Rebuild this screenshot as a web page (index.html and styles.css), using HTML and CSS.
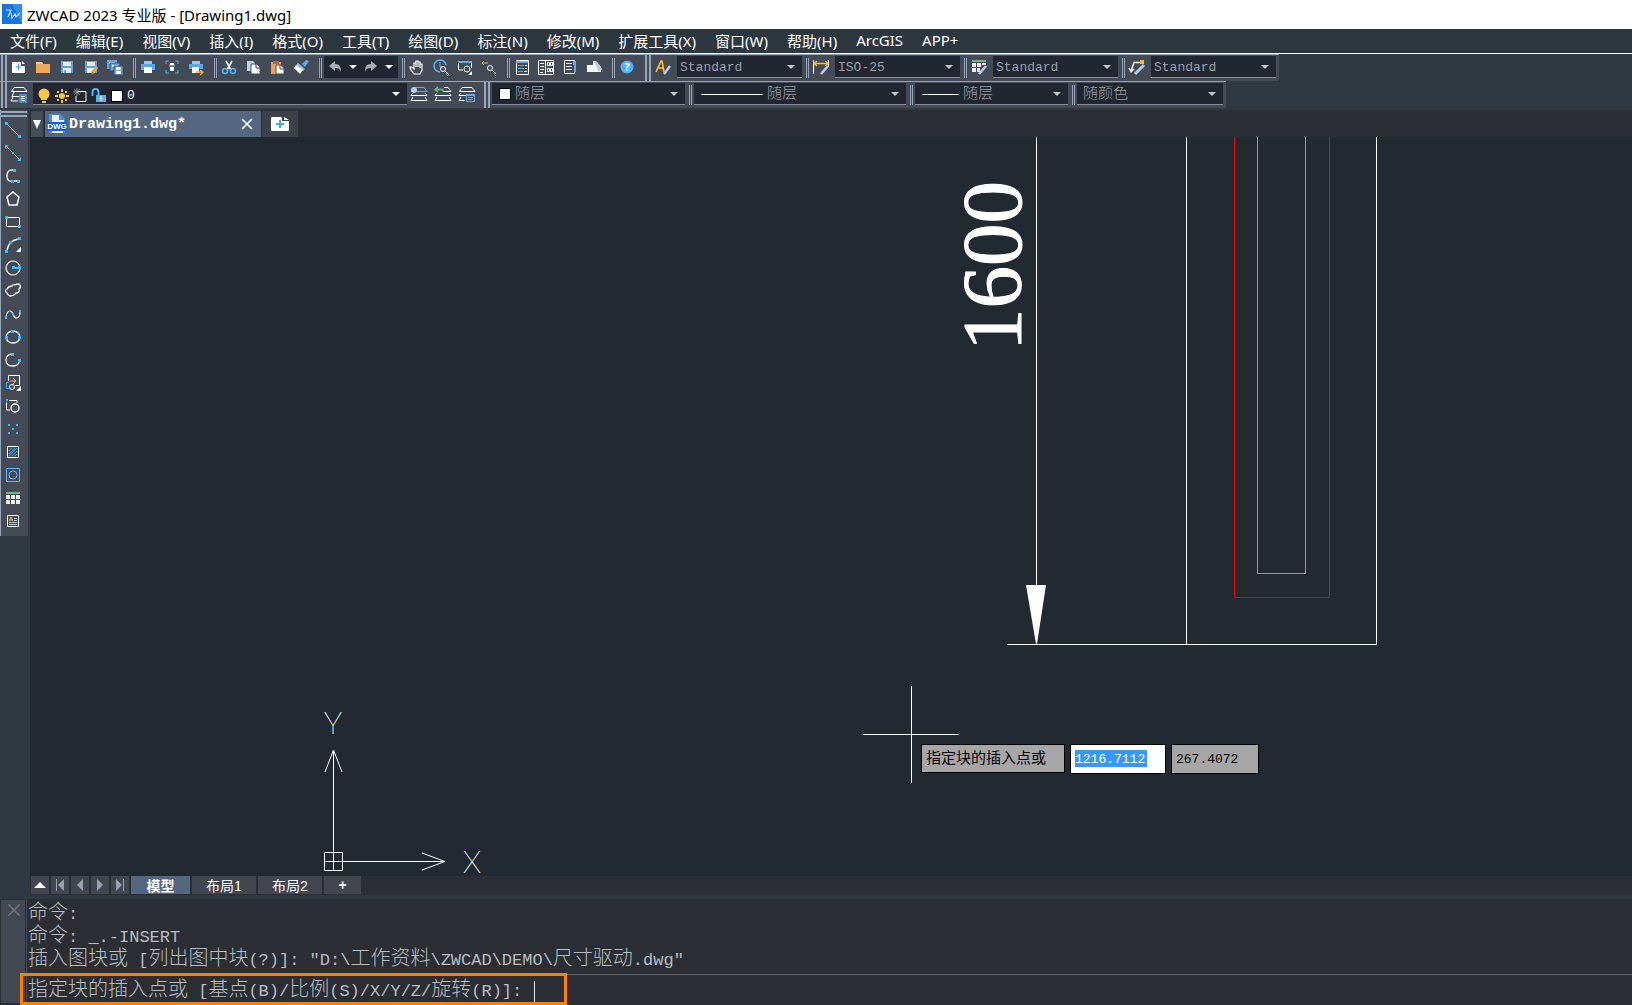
FILE: index.html
```html
<!DOCTYPE html>
<html lang="zh-CN">
<head>
<meta charset="utf-8">
<title>ZWCAD 2023 专业版 - [Drawing1.dwg]</title>
<link rel="stylesheet" href="styles.css">
</head>
<body>
<div class="app">
  <header class="titlebar">
    <svg class="logo" viewBox="0 0 20 20"><rect width="20" height="20" fill="#1573e8"/><path d="M10 0h10v20z" fill="#2d8cf5"/><path d="M4 6h5l-3 7M9 9l1 5 3-4 1 3 4-4" fill="none" stroke="#cfe6ff" stroke-width="1.200"/></svg>
    <span>ZWCAD 2023 专业版 - [Drawing1.dwg]</span>
  </header>

  <nav class="menu">
    <button>文件(F)</button><button>编辑(E)</button><button>视图(V)</button><button>插入(I)</button><button>格式(O)</button><button>工具(T)</button><button>绘图(D)</button><button>标注(N)</button><button>修改(M)</button><button>扩展工具(X)</button><button>窗口(W)</button><button>帮助(H)</button><button>ArcGIS</button><button>APP+</button>
  </nav>

  <div class="toolbars">
    <div class="toolbar">
      <i class="grip first"></i>
      <button class="tool" aria-label="新建"><svg viewBox="0 0 18 18"><path d="M2 3h9v4h4v7H2z" fill="#fff"/><path d="M12 2l3 3h-3z" fill="#fff"/><path d="M8.500 5v6M5.500 8h6" stroke="#2f9bf0" fill="none"/></svg></button>
      <button class="tool" aria-label="打开"><svg viewBox="0 0 18 18"><path d="M2 3h6l1 2h7v9H2z" fill="#f0a95c"/><path d="M2 3h6l1 2H2z" fill="#f9cd8f"/></svg></button>
      <button class="tool" aria-label="保存"><svg viewBox="0 0 18 18"><path d="M3 2h12v12H3z" fill="#62a5e6"/><path d="M5 3h8v4H5zM5 9h8v5H5z" fill="#e8eef6"/><path d="M6 11h2v3H6z" fill="#62a5e6"/></svg></button>
      <button class="tool" aria-label="另存为"><svg viewBox="0 0 18 18"><path d="M3 2h12v12H3z" fill="#62a5e6"/><path d="M5 3h8v4H5zM5 9h8v5H5z" fill="#e8eef6"/><path d="M10 14l5-6" stroke="#f4a733" stroke-width="3"/><path d="M9 16l1-3 2 2z" fill="#d9533a"/></svg></button>
      <button class="tool" aria-label="全部保存"><svg viewBox="0 0 18 18"><path d="M1 1h10v9H1z" fill="#62a5e6"/><path d="M3 3h6v2H3z" fill="#fff"/><path d="M4 4h10v8H4z" fill="#62a5e6" stroke="#444b57"/><path d="M6 6h6v2H6z" fill="#fff"/><path d="M8 7h9v9H8z" fill="#62a5e6" stroke="#444b57"/><path d="M10 8h5v3h-5zM10 12h5v3h-5z" fill="#fff"/></svg></button>
      <i class="sep"></i>
      <button class="tool" aria-label="打印"><svg viewBox="0 0 18 18"><path d="M5 2h8v3H5z" fill="#9cc8f2"/><path d="M2 5h14v6H2z" fill="#5ba6ec"/><path d="M5 8h8v6H5z" fill="#fff"/></svg></button>
      <button class="tool" aria-label="打印预览"><svg viewBox="0 0 18 18" fill="none"><path d="M3 5V2h3M12 2h3v3M15 11v3h-3M6 14H3v-3" stroke="#5bb0f5"/><path d="M6 6h6M6 7h6" stroke="#5bb0f5"/><path d="M7 4h4v2H7zM7 8h4v4H7z" fill="#fff"/></svg></button>
      <button class="tool" aria-label="发布"><svg viewBox="0 0 18 18"><path d="M5 2h8v3H5z" fill="#9cc8f2"/><path d="M2 5h14v5H2z" fill="#5ba6ec"/><path d="M5 8h7v6H5z" fill="#fff"/><path d="M9 13h6M13 11l3 2-3 3" stroke="#f4ad3c" stroke-width="1.300" fill="none"/></svg></button>
      <i class="sep"></i>
      <button class="tool" aria-label="剪切"><svg viewBox="0 0 18 18" fill="none"><path d="M6 2l5 9M12 2l-5 9" stroke="#fff" stroke-width="1.600"/><circle cx="5" cy="12" r="2.500" stroke="#5bb0f5" stroke-width="1.500"/><circle cx="13" cy="12" r="2.500" stroke="#5bb0f5" stroke-width="1.500"/></svg></button>
      <button class="tool" aria-label="复制"><svg viewBox="0 0 18 18"><path d="M3 2h6l2 2v8H3z" fill="#b9d5ee"/><path d="M7 5h6l3 3v7H7z" fill="#fff" stroke="#444b57"/><path d="M12 5v4h4" fill="none" stroke="#444b57"/></svg></button>
      <button class="tool" aria-label="粘贴"><svg viewBox="0 0 18 18"><path d="M3 3h10v12H3z" fill="#f0a050"/><path d="M5 2h6v3H5z" fill="#b06a38"/><path d="M8 6h5l3 3v6H8z" fill="#fff" stroke="#444b57"/><path d="M12 6v4h4" fill="none" stroke="#444b57"/></svg></button>
      <button class="tool" aria-label="特性匹配"><svg viewBox="0 0 18 18"><path d="M10 5l4-4 3 1-4 6z" fill="#63a9ee"/><path d="M6 4l7 6-2 2-7-6z" fill="#8bc0f0"/><path d="M4 6l7 5-3 4-6-6z" fill="#fff"/></svg></button>
      <i class="sep"></i>
      <div class="history">
        <button aria-label="放弃"><svg viewBox="0 0 18 18"><path d="M3 8l6-5v3c5 0 6 3 6 8-1-3-2-4-6-4v3z" fill="#aaadb2"/></svg></button>
        <button class="drop" aria-label="放弃列表"></button>
        <button aria-label="重做"><svg viewBox="0 0 18 18"><path d="M15 8L9 3v3c-5 0-6 3-6 8 1-3 2-4 6-4v3z" fill="#aaadb2"/></svg></button>
        <button class="drop" aria-label="重做列表"></button>
      </div>
      <i class="sep"></i>
      <button class="tool" aria-label="平移"><svg viewBox="0 0 18 18" fill="none" stroke="#fff" stroke-width="1.200"><path d="M6 15l-3-4-1-3 2 0 2 2V4h2V2h2v1h2v2h2v6l-2 4zM8 4v4M10 3v5M12 5v4"/></svg></button>
      <button class="tool" aria-label="实时缩放"><svg viewBox="0 0 18 18" fill="none"><path d="M8 13a6 6 0 1 1 6-7" stroke="#5bb0f5" stroke-width="1.500"/><path d="M8 3v5h3" stroke="#5bb0f5"/><circle cx="11" cy="10" r="2.500" stroke="#fff"/><path d="M13 12l4 4" stroke="#fff"/></svg></button>
      <button class="tool" aria-label="窗口缩放"><svg viewBox="0 0 18 18" fill="none"><path d="M2 3h14" stroke="#5bb0f5" stroke-width="2"/><path d="M2.500 4v7H7M15.500 4v5" stroke="#fff"/><circle cx="11" cy="10" r="3" stroke="#fff"/><path d="M16 12v4h-4z" fill="#fff"/></svg></button>
      <button class="tool" aria-label="上一个视图"><svg viewBox="0 0 18 18" fill="none"><path d="M2 4h6M4 2L2 4l2 2" stroke="#f4b53c"/><circle cx="10" cy="9" r="2.500" stroke="#fff"/><path d="M12 11l4 4" stroke="#fff"/></svg></button>
      <i class="sep"></i>
      <button class="tool" aria-label="特性"><svg viewBox="0 0 18 18" fill="none"><path d="M3.500 1.500h12v14h-12z" stroke="#fff"/><path d="M3 3h12" stroke="#5bb0f5" stroke-width="2"/><path d="M5 6.500h6M5 9.500h6M5 12.500h5" stroke="#5bb0f5"/><path d="M12 6.500h2M12 9.500h2M11 12.500h3" stroke="#fff"/></svg></button>
      <button class="tool" aria-label="设计中心"><svg viewBox="0 0 18 18" fill="none" stroke="#fff"><path d="M1.500 1.500h15v14h-15zM8.500 1v15M3 4.500h4M3 7.500h4M3 10.500h4M3 13.500h3M10.500 3.500h2v3h-2zM13.500 3.500h2v3h-2zM10.500 9.500h2v3h-2zM13.500 9.500h2v3h-2z"/></svg></button>
      <button class="tool" aria-label="工具选项板"><svg viewBox="0 0 18 18" fill="none"><path d="M3.500 1.500h10v13h-10z" stroke="#fff"/><path d="M12 2h3v11h-2V6h-1z" fill="#5bb0f5"/><path d="M5 4.500h6M5 7.500h6M5 10.500h6" stroke="#e8eef6"/></svg></button>
      <button class="tool" aria-label="清理"><svg viewBox="0 0 18 18"><path d="M2 6h6V2h3l5 6v5H2z" fill="#fff"/><path d="M9 3h3l5 7-3 3z" fill="#c5c9cf"/></svg></button>
      <i class="sep"></i>
      <button class="tool" aria-label="帮助"><svg viewBox="0 0 18 18"><circle cx="9" cy="8" r="6.500" fill="#53b2fb"/><text x="9" y="12" text-anchor="middle" class="help-mark">?</text></svg></button>
      <i class="grip"></i>
      <button class="tool" aria-label="文字样式"><svg viewBox="0 0 18 18" fill="none"><path d="M2 13L7 2h1l2 11M4 9h5" stroke="#fcc02e" stroke-width="1.600"/><path d="M10 15l6-8" stroke="#b4cdea" stroke-width="2.500"/></svg></button>
      <label class="combo style"><select aria-label="文字样式"><option>Standard</option></select></label>
      <i class="sep"></i>
      <button class="tool" aria-label="标注样式"><svg viewBox="0 0 18 18" fill="none"><path d="M1.500 1v14M16.500 1v7" stroke="#fff"/><path d="M2 4.500h13M5 2L2 4.500 5 7M13 2l3 2.500L13 7" stroke="#fcc02e" stroke-width="1.500"/><path d="M9 15l7-8" stroke="#b4cdea" stroke-width="2.500"/></svg></button>
      <label class="combo style"><select aria-label="标注样式"><option>ISO-25</option></select></label>
      <i class="sep"></i>
      <button class="tool" aria-label="表格样式"><svg viewBox="0 0 18 18"><path d="M2 1h14v2H2z" fill="#6fbf84"/><path d="M2 4h4v4H2zM7 4h4v4H7zM12 4h4v2h-4zM2 9h4v4H2zM7 9h3v4H7z" fill="#f0f0ee"/><path d="M9 15l7-8" stroke="#b4cdea" stroke-width="2.500"/></svg></button>
      <label class="combo style"><select aria-label="表格样式"><option>Standard</option></select></label>
      <i class="sep"></i>
      <button class="tool" aria-label="多重引线样式"><svg viewBox="0 0 18 18" fill="none"><path d="M12 3.500H6L3 12M1 9l2 4 3-3" stroke="#fff" stroke-width="1.300"/><path d="M12 1h4v4h-4z" fill="#fcc02e"/><path d="M7 15l9-9" stroke="#b4cdea" stroke-width="3"/></svg></button>
      <label class="combo style"><select aria-label="多重引线样式"><option>Standard</option></select></label>
    </div>

    <div class="toolbar">
      <i class="grip first"></i>
      <button class="tool" aria-label="图层特性"><svg viewBox="0 0 18 18" fill="none"><path d="M1.500 5.500L4 1.500h10l3 4zM4 6l-2 4.500h7M3 11l-2 4h7" stroke="#fff"/><path d="M9 8h8v9H9z" fill="#3f8fe0"/><path d="M11 10.500h4M11 12.500h4M11 14.500h4" stroke="#fff"/></svg></button>
      <label class="combo layer">
        <svg class="state" viewBox="0 0 70 16"><circle cx="7" cy="6" r="5.500" fill="#fdc73a"/><path d="M4 9h6v3H4zM5 13h4v2H5z" fill="#fdc73a"/><g fill="#fdc73a"><circle cx="25" cy="8" r="3"/><path d="M24 1h2v3h-2zM24 12h2v3h-2zM18 7h3v2h-3zM29 7h3v2h-3zM20 3h2v2h-2zM28 3h2v2h-2zM20 11h2v2h-2zM28 11h2v2h-2z"/></g><path d="M41 3.500h8v10h-10V8" fill="none" stroke="#fff"/><path d="M37 1l6 6M43 1l-6 6M40 0v8M36 4h8" stroke="#aab" stroke-width=".8"/><path d="M55.500 8V4q0-3 3-3t3 3v4" fill="none" stroke="#4db5fb" stroke-width="2"/><path d="M59 7h10v7H59z" fill="#4db5fb"/><path d="M64 8v5M62 10.500h4" stroke="#fff"/></svg>
        <i class="swatch"></i>
        <select aria-label="图层"><option>0</option></select>
      </label>
      <button class="tool" aria-label="将对象的图层置为当前"><svg viewBox="0 0 18 18" fill="none" stroke="#fff"><path d="M1.500 5.500L4 1.500h10l3 4z" stroke="#5bb0f5"/><path d="M3 7l-2 2.500h16L15 7M3 11l-2 3.500h16L15 11"/><circle cx="4" cy="4" r="3" fill="#b4cdea" stroke="none"/></svg></button>
      <button class="tool" aria-label="上一个图层"><svg viewBox="0 0 18 18" fill="none" stroke="#fff"><path d="M10 1.500h4l3 4H9"/><path d="M3 7l-2 2.500h16L15 7M3 11l-2 3.500h16L15 11"/><path d="M9 6V3.500H2M4 1L1 3.500 4 6" stroke="#5fd04f" stroke-width="1.300"/></svg></button>
      <button class="tool" aria-label="图层状态"><svg viewBox="0 0 18 18" fill="none" stroke="#fff"><path d="M1.500 5.500L4 1.500h10l3 4zM3 7l-2 2.500h7M3 11l-2 3.500h6"/><path d="M8.500 8.500h8v7h-8z" stroke="#5bb0f5"/><path d="M8 9h9" stroke="#5bb0f5" stroke-width="2"/><path d="M10 11.500h5M10 13.500h5" stroke="#5bb0f5"/></svg></button>
      <i class="grip props"></i>
      <label class="combo color"><i class="swatch"></i><select aria-label="颜色"><option>随层</option></select></label>
      <i class="sep"></i>
      <label class="combo ltype"><i class="rule"></i><select aria-label="线型"><option>随层</option></select></label>
      <i class="sep"></i>
      <label class="combo lweight"><i class="rule"></i><select aria-label="线宽"><option>随层</option></select></label>
      <i class="sep"></i>
      <label class="combo pstyle"><select aria-label="打印样式"><option>随颜色</option></select></label>
    </div>
  </div>

  <main class="work">
    <aside class="draw">
      <button aria-label="直线"><svg viewBox="0 0 18 18"><path d="M3 3l12 12" stroke="#fff"/><path d="M1 1h3v3H1zM14 14h3v3h-3z" fill="#35bdff"/></svg></button>
      <button aria-label="构造线"><svg viewBox="0 0 18 18"><path d="M3 3l12 12" stroke="#fff" stroke-dasharray="3 1"/><path d="M1 1h4L1 5zM17 17h-4l4-4zM8 8h2v2H8z" fill="#35bdff"/></svg></button>
      <button aria-label="多段线"><svg viewBox="0 0 18 18"><path d="M11 3H8Q3 3 3 9t5 5h7" fill="none" stroke="#fff" stroke-width="1.300"/><path d="M9 2h3v3H9zM7 13h3v3H7zM13 13h3v3h-3z" fill="#35bdff"/></svg></button>
      <button aria-label="正多边形"><svg viewBox="0 0 18 18"><path d="M9 2l6 5-2 8H5L3 7z" fill="none" stroke="#fff" stroke-width="1.500"/></svg></button>
      <button aria-label="矩形"><svg viewBox="0 0 18 18"><path d="M2.500 4.500h13v9h-13z" fill="none" stroke="#fff"/><path d="M1 3h3v3H1zM14 12h3v3h-3z" fill="#35bdff"/></svg></button>
      <button aria-label="圆弧"><svg viewBox="0 0 18 18"><path d="M3 14Q5 4 15 3" fill="none" stroke="#fff" stroke-width="1.400"/><path d="M1 14h3v3H1zM5 5h3v3H5zM14 1h3v3h-3z" fill="#35bdff"/><path d="M17 11v5h-5z" fill="#fff"/></svg></button>
      <button aria-label="圆"><svg viewBox="0 0 18 18"><circle cx="9" cy="9" r="7" fill="none" stroke="#fff" stroke-width="1.200"/><path d="M9 9h6" stroke="#fff"/><path d="M8 7h3v3H8zM14 7h3v3h-3z" fill="#35bdff"/></svg></button>
      <button aria-label="修订云线"><svg viewBox="0 0 18 18"><path d="M3 7q2-3 5-3 1-2 3-1 3-2 5 0 1 3-1 4 1 4-3 4-2 3-6 3-2-1-3-3-3-2 0-4z" fill="none" stroke="#fff" stroke-width="1.300"/></svg></button>
      <button aria-label="样条曲线"><svg viewBox="0 0 18 18"><path d="M2 12q1-6 4-6 2 0 3 3 1 4 4 4 3-1 3-6" fill="none" stroke="#fff" stroke-width="1.200"/><path d="M1 11h2v3H1zM8 8h2v2H8zM15 5h2v2h-2z" fill="#35bdff"/></svg></button>
      <button aria-label="椭圆"><svg viewBox="0 0 18 18"><ellipse cx="9" cy="9" rx="7" ry="6" fill="none" stroke="#fff" stroke-width="1.300"/><path d="M7 2h3v3H7zM1 8h3v3H1zM14 8h3v3h-3z" fill="#35bdff"/></svg></button>
      <button aria-label="椭圆弧"><svg viewBox="0 0 18 18"><path d="M9 3Q2 3 2 9t7 6q6 0 6-5" fill="none" stroke="#fff" stroke-width="1.300"/><path d="M7 2h3v3H7zM14 8h3v3h-3z" fill="#35bdff"/></svg></button>
      <button aria-label="插入块"><svg viewBox="0 0 18 18" fill="none"><path d="M4.500 7V1.500h11v10H11" stroke="#fff"/><path d="M5 8.500H2.500v6H5" stroke="#35a8ff"/><path d="M6 7h5M9 4l3 3-3 3" stroke="#f5b944"/><circle cx="8" cy="13" r="2.500" stroke="#fff"/><path d="M17 12v5h-5z" fill="#fff"/></svg></button>
      <button aria-label="创建块"><svg viewBox="0 0 18 18" fill="none"><path d="M5 3.500h8V6M2.500 5v8H6" stroke="#fff"/><circle cx="11" cy="11" r="4" stroke="#fff" stroke-width="1.300"/><path d="M2 2h2v2H2z" fill="#35bdff"/></svg></button>
      <button aria-label="点"><svg viewBox="0 0 18 18"><path d="M4 4h2v2H4zM12 4h2v2h-2zM8 8h2v2H8zM4 12h2v2H4zM12 12h2v2h-2z" fill="#35bdff"/></svg></button>
      <button aria-label="图案填充"><svg viewBox="0 0 18 18" fill="none"><path d="M3.500 3.500h11v11h-11z" stroke="#fff"/><path d="M5 8l3-3M5 11l6-6M5 13l8-8M8 13l5-5M11 13l2-2" stroke="#4aa9f5"/></svg></button>
      <button aria-label="面域"><svg viewBox="0 0 18 18" fill="none" stroke="#5bb5fb"><path d="M2.500 2.500h13v13h-13z"/><circle cx="9" cy="9" r="4"/></svg></button>
      <button aria-label="表格"><svg viewBox="0 0 18 18"><path d="M2 3h14v2H2z" fill="#6fbf84"/><path d="M2 6h4v4H2zM7 6h4v4H7zM12 6h4v4h-4zM2 11h4v4H2zM7 11h4v4H7zM12 11h4v4h-4z" fill="#f0f0ee"/></svg></button>
      <button aria-label="多行文字"><svg viewBox="0 0 18 18" fill="none"><path d="M3.500 3.500h11v11h-11z" stroke="#fff"/><path d="M5 9l2-4 2 4M6 8h2" stroke="#fcc02e"/><path d="M10 6.500h3M10 8.500h3M5 10.500h8M5 12.500h8" stroke="#b4cdea"/></svg></button>
    </aside>

    <section class="document">
      <div class="doc-tabs">
        <button class="list" aria-label="图纸列表"></button>
        <div class="doc-tab">
          <svg class="dwg" viewBox="0 0 20 20"><path d="M2 0h11l5 5v14H2z" fill="#4d8fdd"/><path d="M5 1h7v5h5v4H5z" fill="#e8f1fb"/><path d="M5 17h11v2H5z" fill="#fff"/><path d="M0 8h20v9H0z" fill="#0d63d8"/><text x="10" y="15" text-anchor="middle">DWG</text></svg>
          <span>Drawing1.dwg*</span>
          <button class="close" aria-label="关闭"><svg viewBox="0 0 12 12"><path d="M1 1l10 10M11 1L1 11" stroke="#fff" stroke-width="1.600"/></svg></button>
        </div>
        <button class="new" aria-label="新建图纸"><svg viewBox="0 0 18 14"><path d="M0 0h11v4h7v10H0z" fill="#fff"/><path d="M13 0l5 3h-5z" fill="#fff"/><path d="M9 3v8M5 7h8" stroke="#43a5f0" stroke-width="2"/></svg></button>
      </div>

      <div class="canvas">
        <svg class="drawing">
          <g fill="none" stroke="#fff">
            <path d="M1006.500 0V508M977 507.500h370M1156.500 0V508M1346.500 0V508"/>
            <path d="M833 597.500h96M881.500 549v97"/>
            <path d="M294.500 715.500h18v18h-18zM303.500 734V613M294 724.500h121M295 635l8.500-22 8.500 22M392 716l23 8.500-23 8.500"/>
          </g>
          <path d="M996 448h20l-9 59h-1z" fill="#fff"/>
          <path d="M1204.500 0v460.500h95V0" fill="none" stroke="#f00"/>
          <path d="M1227.500 0v436.500h48V0" fill="none" stroke="#0f0"/>
          <text class="dim" transform="translate(991 214) rotate(-90)">1600</text>
          <text class="axis" x="303" y="597" text-anchor="middle">Y</text>
          <text class="axis" x="442" y="736" text-anchor="middle">X</text>
        </svg>
        <div class="dynamic">
          <label class="prompt" for="dyn-x">指定块的插入点或</label>
          <input id="dyn-x" class="active" value="1216.7112">
          <input aria-label="Y" value="267.4072">
        </div>
      </div>

      <div class="layouts">
        <button class="nav" aria-label="展开"><svg viewBox="0 0 12 12"><path d="M6 3l6 6H0z" fill="#fff"/></svg></button>
        <button class="nav" aria-label="第一个"><svg viewBox="0 0 12 12"><path d="M10 0v12L4 6z" fill="#99a2b0"/><path d="M2.500 0v12" stroke="#99a2b0"/></svg></button>
        <button class="nav" aria-label="上一个"><svg viewBox="0 0 12 12"><path d="M9 0v12L3 6z" fill="#99a2b0"/></svg></button>
        <button class="nav" aria-label="下一个"><svg viewBox="0 0 12 12"><path d="M3 0v12l6-6z" fill="#99a2b0"/></svg></button>
        <button class="nav" aria-label="最后一个"><svg viewBox="0 0 12 12"><path d="M2 0v12l6-6z" fill="#99a2b0"/><path d="M9.500 0v12" stroke="#99a2b0"/></svg></button>
        <button class="sheet model">模型</button>
        <button class="sheet">布局1</button>
        <button class="sheet">布局2</button>
        <button class="sheet add">+</button>
      </div>
    </section>
  </main>

  <footer class="command">
    <div class="handle"><button aria-label="关闭命令行"><svg viewBox="0 0 12 12"><path d="M0 0l12 12M12 0L0 12" stroke="#6d747f" stroke-width="1.500"/></svg></button></div>
    <div class="console">
      <div class="history-lines">
        <p><span class="zh">命令</span>:</p>
        <p><span class="zh">命令</span>: _.-INSERT</p>
        <p><span class="zh">插入图块或</span> [<span class="zh">列出图中块</span>(?)]: "D:\<span class="zh">工作资料</span>\ZWCAD\DEMO\<span class="zh">尺寸驱动</span>.dwg"</p>
      </div>
      <div class="entry">
        <label for="cmd"><span class="zh">指定块的插入点或</span> [<span class="zh">基点</span>(B)/<span class="zh">比例</span>(S)/X/Y/Z/<span class="zh">旋转</span>(R)]:</label>
        <i class="caret"></i>
        <input id="cmd" autocomplete="off">
      </div>
    </div>
    <div class="highlight"></div>
  </footer>
</div>
</body>
</html>
```
FILE: styles.css
```css
*, *::before, *::after { box-sizing: border-box; }
:root {
  --panel: #444b57;
  --frame: #303842;
  --strip: #2b2e32;
  --well: #212631;
  --edge: #97a5ba;
  --mono: "Liberation Mono", "Noto Sans CJK SC", monospace;
  --ui: "Noto Sans", "Noto Sans CJK SC", sans-serif;
}
body { margin: 0; font-family: var(--ui); }
button, select, input { margin: 0; padding: 0; border: 0; background: none; color: inherit; font: inherit; border-radius: 0; outline: 0; }
button { display: flex; align-items: center; justify-content: center; flex: none; }
svg { display: block; flex: none; }
.app { height: 100vh; display: flex; flex-direction: column; background: var(--frame); overflow: hidden; }

/* title and menu */
.titlebar { flex: none; height: 29px; display: flex; align-items: center; gap: 5px; padding: 0 0 1px 2px; background: #fff; color: #000; font-size: 15px; white-space: nowrap; }
.logo { width: 20px; height: 20px; }
.menu { flex: none; height: 25px; display: flex; gap: 19px; padding: 0 0 2px 10px; background: #2d3740; border-bottom: 1px solid #fff; color: #fff; font-size: 15px; white-space: nowrap; }

/* toolbars */
.toolbars { flex: none; display: flex; flex-direction: column; align-items: flex-start; margin-bottom: 2px; }
.toolbar { display: flex; align-items: stretch; height: 27px; padding-right: 3px; background: var(--panel); border-top: 1px solid var(--edge); }
.tool { width: 24px; }
.tool svg, .history svg, .draw svg { width: 18px; height: 18px; }
.grip { flex: none; width: 6px; margin-left: 6px; border: solid var(--edge); border-width: 0 2px; }
.grip.first { margin-left: 1px; }
.grip.props { margin-left: 5px; }
.sep { flex: none; width: 3px; margin: 3px 0 3px 6px; border: solid var(--edge); border-width: 0 1px; }
.history + .sep, .combo + .sep { margin-left: 4px; }
.history { display: flex; width: 74px; margin: 1px 0 3px 2px; padding-left: 2px; background: var(--well); }
.history button { width: 18px; }
.history .drop::after { content: ""; border: solid transparent; border-width: 4px 4px 0; border-top-color: #fff; }
.help-mark { font: 700 11px var(--ui); fill: #fff; }
.combo { position: relative; display: flex; align-items: center; flex: none; margin: 1px 0 3px 2px; padding: 1px 0 0 3px; background: var(--well); border-bottom: 1px solid #858d99; color: #999fa8; font: 300 15px var(--mono); }
.combo select { flex: 1; height: 100%; appearance: none; }
.combo option { background: var(--well); }
.combo::after { content: ""; position: absolute; right: 7px; top: 9px; border: solid transparent; border-width: 4px 4px 0; border-top-color: #c4c6c8; pointer-events: none; }
.style { width: 125px; font-size: 13px; }
.layer { width: 374px; padding: 4px 0 0 4px; gap: 4px; color: #fff; font-size: 13px; }
.layer::after { border-top-color: #fff; }
.state { width: 70px; height: 16px; }
.swatch { flex: none; width: 12px; height: 12px; background: #fff; border: 1px solid #000; }
.color { width: 193px; padding-left: 7px; gap: 4px; }
.rule { flex: none; height: 1px; background: #fff; }
.ltype { width: 212px; padding-left: 7px; gap: 4px; }
.ltype .rule { width: 62px; }
.lweight { width: 153px; padding-left: 7px; gap: 4px; }
.lweight .rule { width: 37px; }
.pstyle { width: 146px; padding-left: 6px; }

/* work area */
.work { flex: 1; min-height: 0; display: flex; margin-bottom: 4px; }
.draw { flex: none; align-self: flex-start; width: 28px; margin-right: 2px; padding: 1px 0 4px; background: var(--panel); border-left: 1px solid var(--edge); }
.draw::before { content: ""; display: block; height: 6px; margin: 0 1px 1px 0; border: solid var(--edge); border-width: 2px 0; }
.draw button { width: 24px; height: 23px; }
.document { flex: 1; min-width: 0; display: flex; flex-direction: column; }
.doc-tabs { flex: none; display: flex; height: 27px; padding: 1px 0 0 1px; background: var(--strip); }
.list { width: 12px; background: #444e57; }
.list::after { content: ""; border: solid transparent; border-width: 9px 4px 0; border-top-color: #fff; }
.doc-tab { display: flex; align-items: center; width: 216px; margin: 0 1px 0 2px; padding: 0 8px 0 2px; background: #536781; color: #fff; font: 700 15px var(--mono); }
.dwg { width: 20px; height: 20px; margin-right: 2px; }
.dwg text { font: 700 8px "Liberation Sans", sans-serif; fill: #fff; }
.close { margin-left: auto; }
.close svg { width: 12px; height: 12px; }
.new { width: 36px; background: #3c414a; }
.new svg { width: 18px; height: 14px; }

.canvas { position: relative; flex: 1; min-height: 0; background: #222930; overflow: hidden; }
.drawing { width: 100%; height: 100%; overflow: visible; }
.dim { font: 85px "Liberation Serif", serif; fill: #fff; stroke: #fff; stroke-width: 1px; }
.axis { font: 100 31px Roboto, sans-serif; fill: #fff; }
.dynamic { position: absolute; left: 891px; top: 607px; display: flex; align-items: flex-start; gap: 5px; color: #000; font: 13px var(--mono); }
.dynamic > * { height: 30px; padding: 0 4px; border: 1px solid #000; background: #a6a6a6; }
.dynamic .prompt { width: 144px; height: 29px; font-size: 15px; line-height: 30px; white-space: nowrap; }
.dynamic input { width: 88px; }
.dynamic .active { width: 96px; color: #fff; background: linear-gradient(#3399ff, #3399ff) 4px 5px / 72px 17px no-repeat #fff; }

.layouts { flex: none; display: flex; gap: 2px; height: 19px; padding: 0 0 1px 1px; background: var(--strip); color: #fff; font: 14px "Liberation Sans", "Noto Sans CJK SC", sans-serif; }
.layouts button { background: #41464f; }
.nav { width: 18px; }
.nav svg { width: 12px; height: 12px; }
.sheet { width: 64px; }
.layouts .model { width: 59px; background: #536781; font-weight: 700; }
.layouts .add { width: 37px; font-weight: 700; }

/* command line */
.command { position: relative; flex: none; display: flex; height: 106px; background: var(--strip); color: #b9bdc4; }
.handle { flex: none; width: 24px; margin: 1px 1px 2px 1px; padding: 4px 0 0 7px; background: #424955; }
.handle svg { width: 12px; height: 12px; }
.console { flex: 1; min-width: 0; display: flex; flex-direction: column; padding-left: 1px; border-left: 1px solid #444b57; font: 300 17px/23px var(--mono); white-space: nowrap; }
.zh { font-size: 20px; line-height: 20px; }
.history-lines { flex: 1; padding-top: 4px; }
.history-lines p { margin: 0; height: 23px; }
.entry { flex: none; display: flex; align-items: center; height: 31px; padding-top: 3px; border-top: 1px solid #5d6166; }
.caret { width: 1px; height: 22px; margin-left: 12px; background: #e6e6e6; }
.entry input { flex: 1; }
.highlight { position: absolute; left: 20px; bottom: 0; width: 547px; height: 32px; border: 3px solid #ff8000; pointer-events: none; }
```
